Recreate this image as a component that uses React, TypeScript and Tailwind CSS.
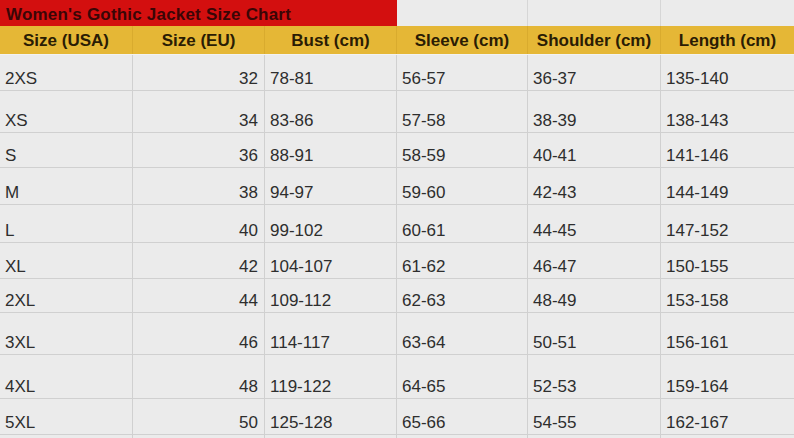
const cols = "grid grid-cols-[133px_132px_132px_131px_133px_133px]";

const headers = ["Size (USA)", "Size (EU)", "Bust (cm)", "Sleeve (cm)", "Shoulder (cm)", "Length (cm)"];

const rows = [
  { h: 36, cells: ["2XS", "32", "78-81", "56-57", "36-37", "135-140"] },
  { h: 42, cells: ["XS", "34", "83-86", "57-58", "38-39", "138-143"] },
  { h: 35, cells: ["S", "36", "88-91", "58-59", "40-41", "141-146"] },
  { h: 37, cells: ["M", "38", "94-97", "59-60", "42-43", "144-149"] },
  { h: 38, cells: ["L", "40", "99-102", "60-61", "44-45", "147-152"] },
  { h: 36, cells: ["XL", "42", "104-107", "61-62", "46-47", "150-155"] },
  { h: 34, cells: ["2XL", "44", "109-112", "62-63", "48-49", "153-158"] },
  { h: 42, cells: ["3XL", "46", "114-117", "63-64", "50-51", "156-161"] },
  { h: 44, cells: ["4XL", "48", "119-122", "64-65", "52-53", "159-164"] },
  { h: 36, cells: ["5XL", "50", "125-128", "65-66", "54-55", "162-167"] },
];

export default function App() {
  return (
    <div className="w-[794px] h-[438px] overflow-hidden bg-[#ebebeb] font-['Liberation_Sans',Arial,sans-serif] text-[#2e2e2e]">
      {/* title row */}
      <div className={`${cols} h-[26px]`}>
        <div className="col-span-3 bg-[#d30f0f] flex items-end pl-[6px] pb-[3px] border-r border-[#d30f0f]">
          <span className="text-[17px] leading-none font-bold tracking-[0.2px] text-[#3a0606]">
            Women's Gothic Jacket Size Chart
          </span>
        </div>
        <div className="border-r border-[#d6d6d6]" />
        <div className="border-r border-[#d6d6d6]" />
        <div />
      </div>

      {/* header row */}
      <div className={`${cols} h-[29px] bg-[#e5b736] border-b border-[#f2f2f2]`}>
        {headers.map((t, i) => (
          <div
            key={i}
            className={`flex items-end justify-center pb-[5px] ${i < 5 ? "border-r border-[#d9ab2e]" : ""}`}
          >
            <span className="text-[17px] leading-none font-bold text-[#2a1c04]">{t}</span>
          </div>
        ))}
      </div>

      {/* data rows */}
      {rows.map((r, ri) => (
        <div key={ri} className={`${cols} border-b border-[#d0d0d0]`} style={{ height: r.h }}>
          {r.cells.map((c, ci) => (
            <div
              key={ci}
              className={`flex items-end pb-[3px] ${ci === 1 ? "justify-end pr-[6px]" : "pl-[5px]"} ${
                ci < 5 ? "border-r border-[#d0d0d0]" : ""
              }`}
            >
              <span className="text-[17px] leading-none">{c}</span>
            </div>
          ))}
        </div>
      ))}

      {/* partial row below */}
      <div className={`${cols} h-[20px]`}>
        {[0, 1, 2, 3, 4, 5].map((i) => (
          <div key={i} className={i < 5 ? "border-r border-[#d0d0d0]" : ""} />
        ))}
      </div>
    </div>
  );
}
